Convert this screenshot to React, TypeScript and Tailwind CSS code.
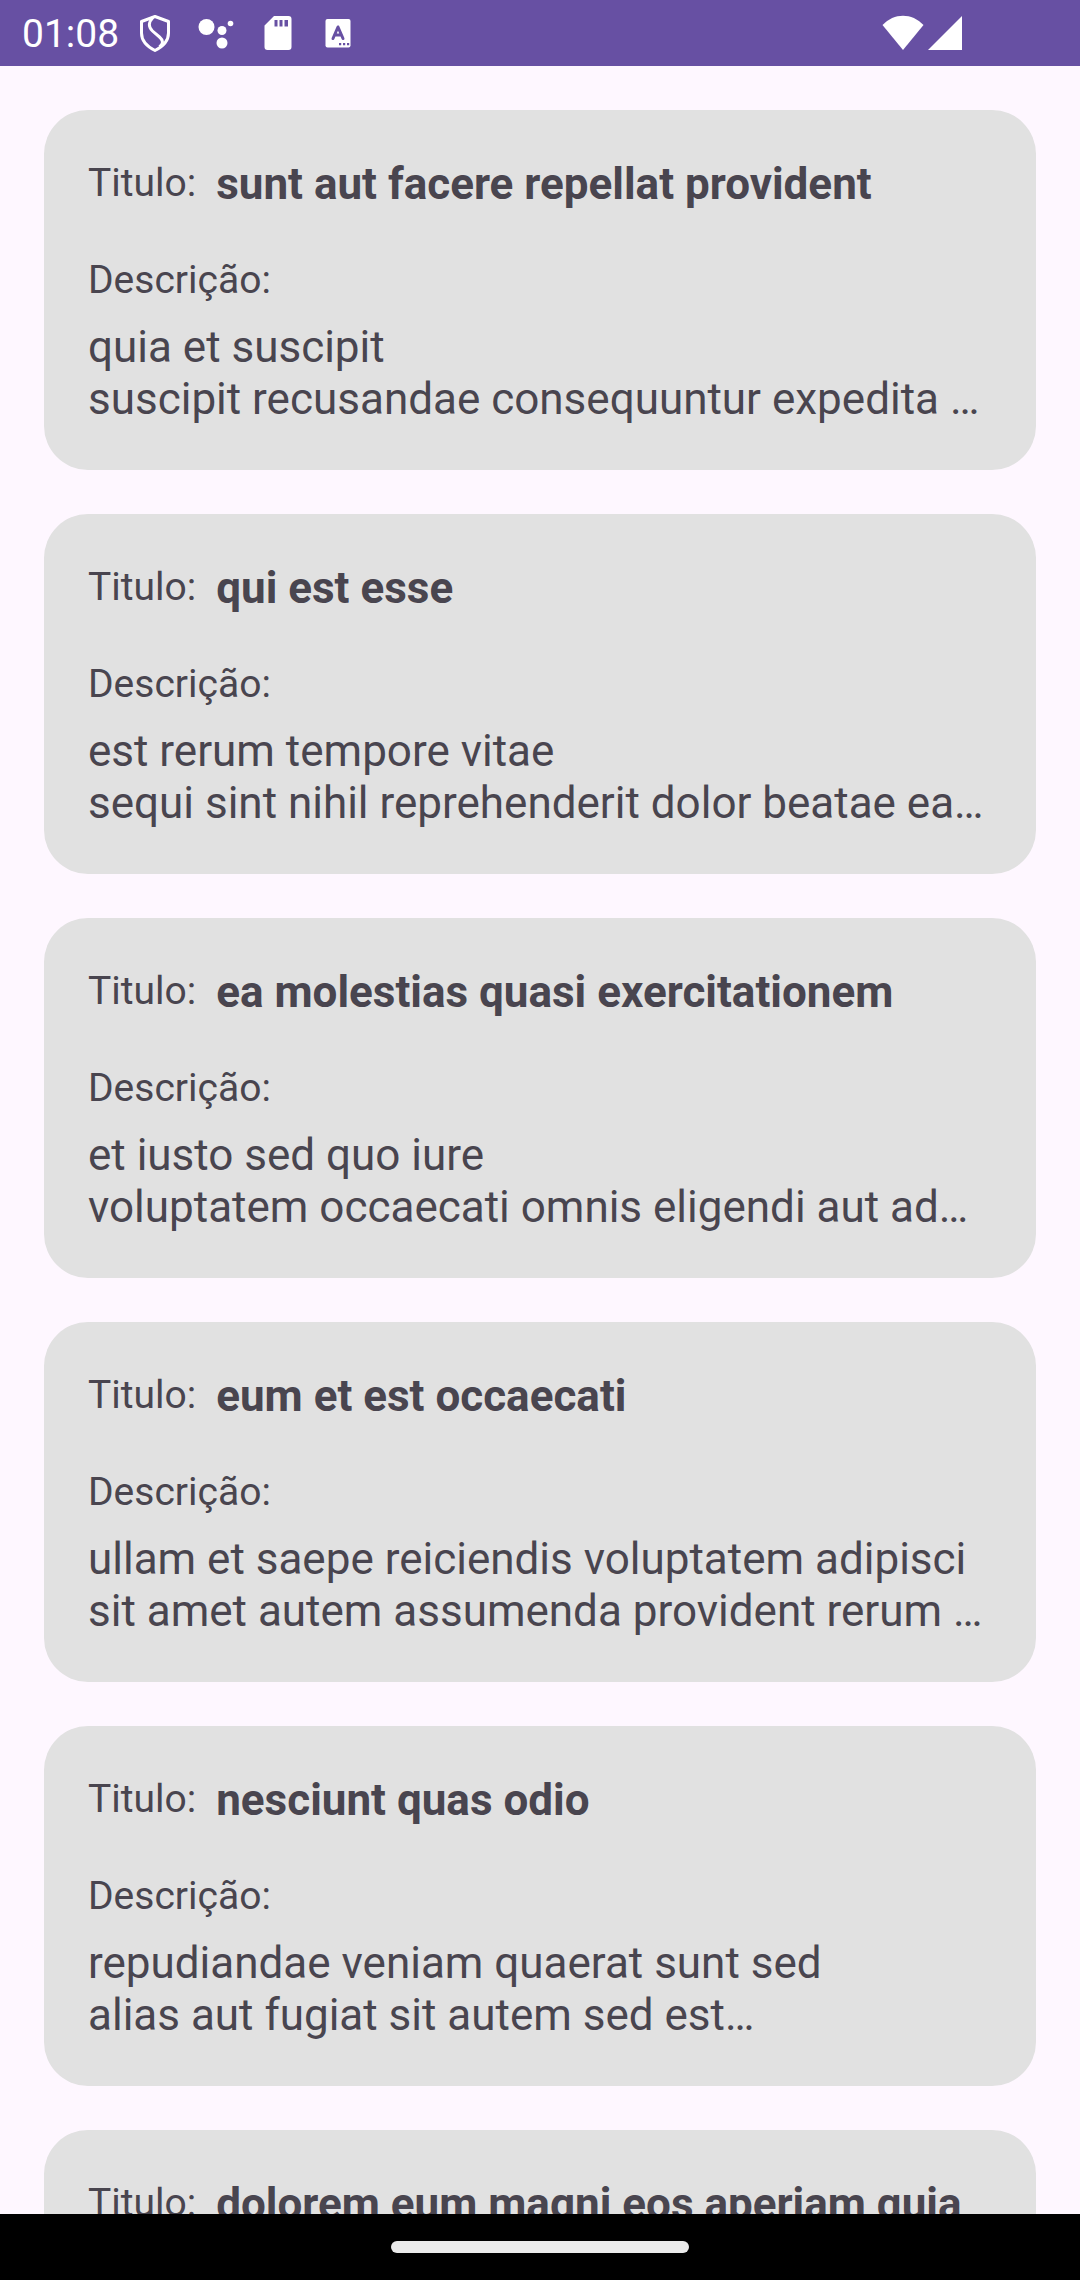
type Post = { title: string; body?: [string, string] };

const posts: Post[] = [
  { title: "sunt aut facere repellat provident", body: ["quia et suscipit", "suscipit recusandae consequuntur expedita …"] },
  { title: "qui est esse", body: ["est rerum tempore vitae", "sequi sint nihil reprehenderit dolor beatae ea…"] },
  { title: "ea molestias quasi exercitationem", body: ["et iusto sed quo iure", "voluptatem occaecati omnis eligendi aut ad…"] },
  { title: "eum et est occaecati", body: ["ullam et saepe reiciendis voluptatem adipisci", "sit amet autem assumenda provident rerum …"] },
  { title: "nesciunt quas odio", body: ["repudiandae veniam quaerat sunt sed", "alias aut fugiat sit autem sed est…"] },
  { title: "dolorem eum magni eos aperiam quia" },
];

function ShieldIcon() {
  return (
    <svg viewBox="0 0 32 38" className="h-[38px] w-8" fill="none" stroke="currentColor" strokeWidth="3" strokeLinejoin="round">
      <path d="M16 2.500 L29.500 7.500 V19 C29.500 26 24 32.500 16 36.500 C8 32.500 2.500 26 2.500 19 V7.500 Z" />
      <path d="M14 3.500 C9.500 8 9 13 13.500 17 L20.500 23 C24.500 26.500 24.500 29.500 20.500 33" />
    </svg>
  );
}

function AssistantIcon() {
  return (
    <svg viewBox="0 0 36 30" className="h-[30px] w-9" fill="currentColor">
      <circle cx="8.500" cy="8" r="8" />
      <circle cx="24" cy="11.500" r="4.500" />
      <circle cx="24" cy="24" r="5.500" />
      <circle cx="32.500" cy="4.500" r="2.800" />
    </svg>
  );
}

function SdCardIcon() {
  return (
    <svg viewBox="0 0 28 36" className="h-9 w-7" fill="currentColor">
      <path
        fillRule="evenodd"
        d="M10 1 H24.500 Q27.500 1 27.500 4 V32 Q27.500 35 24.500 35 H3.500 Q0.500 35 0.500 32 V10.500 Z M10.500 5 V11.500 H13.500 V5 Z M15.500 5 V11.500 H18.500 V5 Z M20.500 5 V11.500 H24 V5 Z"
      />
    </svg>
  );
}

function KeyboardIcon() {
  return (
    <svg viewBox="0 0 26 30" className="h-[30px] w-[26px]">
      <rect x="0.500" y="1" width="25" height="28.500" rx="2" fill="currentColor" />
      <path d="M8 20.500 L13 9 L18 20.500 M10 17 H16" fill="none" stroke="#6750a3" strokeWidth="3" strokeLinecap="round" strokeLinejoin="round" />
      <path d="M14 25 h2.200 v2.200 h-2.200 z M18 25 h2.200 v2.200 h-2.200 z M22 25 h2.200 v2.200 h-2.200 z" fill="#6750a3" />
    </svg>
  );
}

function WifiIcon() {
  return (
    <svg viewBox="0 0 42 36" className="h-9 w-[42px]" fill="currentColor">
      <path d="M21 35 L0.500 10 C12 -2.500 30 -2.500 41.500 10 Z" />
    </svg>
  );
}

function SignalIcon() {
  return (
    <svg viewBox="0 0 34 36" className="h-9 w-[34px]" fill="currentColor">
      <path d="M34 1 V35 H0 Z" />
    </svg>
  );
}

function StatusBar() {
  return (
    <header className="flex h-[66px] shrink-0 items-center bg-[#6750a3] pl-[22px] pr-[118px] text-white">
      <time className="mr-5 pt-0.5 text-[39px] leading-[46px]">01:08</time>
      <div className="flex items-center">
        <ShieldIcon />
        <div className="ml-[27px] mr-[30px] pt-0.5">
          <AssistantIcon />
        </div>
        <SdCardIcon />
        <div className="ml-[33px]">
          <KeyboardIcon />
        </div>
      </div>
      <div className="ml-auto flex items-center gap-1">
        <WifiIcon />
        <SignalIcon />
      </div>
    </header>
  );
}

function PostCard({ post }: { post: Post }) {
  return (
    <article className="rounded-[44px] bg-[#e1e1e1] px-11 pb-[45px] pt-11">
      <div className="flex items-start gap-5 py-1">
        <span className="pt-0.5 text-[39px] leading-[46px]">Titulo:</span>
        <h2 className="whitespace-nowrap text-[44px] font-bold leading-[52px]">{post.title}</h2>
      </div>
      {post.body && (
        <>
          <p className="mt-[43px] text-[39px] leading-[46px]">Descrição:</p>
          <p className="mt-[18px] whitespace-nowrap text-[44px] leading-[52px]">
            {post.body[0]}
            <br />
            {post.body[1]}
          </p>
        </>
      )}
    </article>
  );
}

export default function App() {
  return (
    <div className="flex h-screen flex-col bg-[#fef7ff] font-[Roboto,sans-serif] text-[#49454f]">
      <StatusBar />
      <main className="min-h-0 flex-1 overflow-hidden">
        <div className="flex flex-col gap-11 p-11">
          {posts.map((post) => (
            <PostCard key={post.title} post={post} />
          ))}
        </div>
      </main>
      <footer className="flex h-[66px] shrink-0 items-center justify-center bg-black">
        <div className="h-3 w-[298px] rounded-full bg-[#ebebeb]" />
      </footer>
    </div>
  );
}
